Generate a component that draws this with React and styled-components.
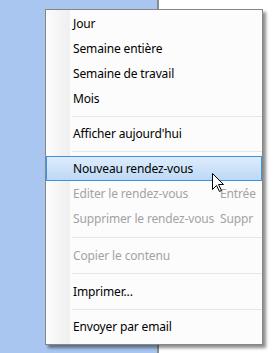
import React from 'react';
import styled, { createGlobalStyle } from 'styled-components';

const GlobalStyle = createGlobalStyle`
  html, body {
    margin: 0;
    padding: 0;
    background: #ffffff;
  }
`;

const Desktop = styled.div`
  position: relative;
  width: 276px;
  height: 353px;
  display: flex;
  overflow: hidden;
  font-family: "Noto Sans", "Liberation Sans", sans-serif;
  font-size: 12px;
`;

const SidePanel = styled.div`
  width: 157px;
  background: #a9c6f1;
  border-right: 2px solid #8c8c8c;
`;

const MainPanel = styled.div`
  flex: 1;
  background: #ffffff;
`;

const Menu = styled.div`
  position: absolute;
  left: 45px;
  top: 9px;
  width: 216px;
  height: 333px;
  padding-top: 1px;
  box-sizing: content-box;
  background: #fcfcfc;
  border: 1px solid #868686;
  box-shadow: 3px 3px 3px rgba(0, 0, 0, 0.45);
  display: flex;
  flex-direction: column;

  &::before {
    content: "";
    position: absolute;
    left: 0;
    top: 0;
    bottom: 0;
    width: 24px;
    background: linear-gradient(to right, #fcfcfc, #efefef);
    border-right: 1px solid #fdfdfd;
  }
`;

const Item = styled.div`
  position: relative;
  height: 25px;
  flex-shrink: 0;
  box-sizing: border-box;
  display: grid;
  grid-template-columns: 147px 1fr;
  align-items: center;
  color: ${p => (p.$disabled ? '#a3a3a3' : '#000000')};
  white-space: nowrap;
  letter-spacing: -0.15px;
  border: 1px solid ${p => (p.$active ? '#3b93e6' : 'transparent')};
  background: ${p =>
    p.$active ? 'linear-gradient(to bottom, #deecfc, #bdd9f6)' : 'transparent'};
  padding-left: 26px;
  padding-bottom: 1px;
`;

const Label = styled.span``;

const Shortcut = styled.span`
  color: #a3a3a3;
`;

const Separator = styled.div`
  position: relative;
  height: ${p => p.$space || 10}px;
  flex-shrink: 0;
  display: flex;
  align-items: center;
  padding-left: 26px;

  &::after {
    content: "";
    flex: 1;
    height: 1px;
    background: #e6e6e6;
  }
`;

const Cursor = styled.svg`
  position: absolute;
  left: 212px;
  top: 173px;
`;

const entries = [
  { label: 'Jour' },
  { label: 'Semaine entière' },
  { label: 'Semaine de travail' },
  { label: 'Mois' },
  { sep: 10 },
  { label: "Afficher aujourd'hui" },
  { sep: 10 },
  { label: 'Nouveau rendez-vous', active: true },
  { label: 'Editer le rendez-vous', shortcut: 'Entrée', disabled: true },
  { label: 'Supprimer le rendez-vous', shortcut: 'Suppr', disabled: true },
  { sep: 12 },
  { label: 'Copier le contenu', disabled: true },
  { sep: 11 },
  { label: 'Imprimer...' },
  { sep: 10 },
  { label: 'Envoyer par email' },
];

export default function App() {
  return (
    <>
      <GlobalStyle />
      <Desktop>
        <SidePanel />
        <MainPanel />
        <Menu>
          {entries.map((e, i) =>
            e.sep ? (
              <Separator key={i} $space={e.sep} />
            ) : (
              <Item key={i} $active={e.active} $disabled={e.disabled}>
                <Label>{e.label}</Label>
                {e.shortcut && <Shortcut>{e.shortcut}</Shortcut>}
              </Item>
            )
          )}
        </Menu>
        <Cursor width="13" height="20" viewBox="0 0 13 20">
          <path
            d="M0.5 0.5 L0.5 16.5 L4.5 12.5 L7.5 18.5 L9.5 17.5 L6.5 11.5 L11.5 11.5 Z"
            fill="#ffffff"
            stroke="#000000"
            strokeWidth="1"
          />
        </Cursor>
      </Desktop>
    </>
  );
}
